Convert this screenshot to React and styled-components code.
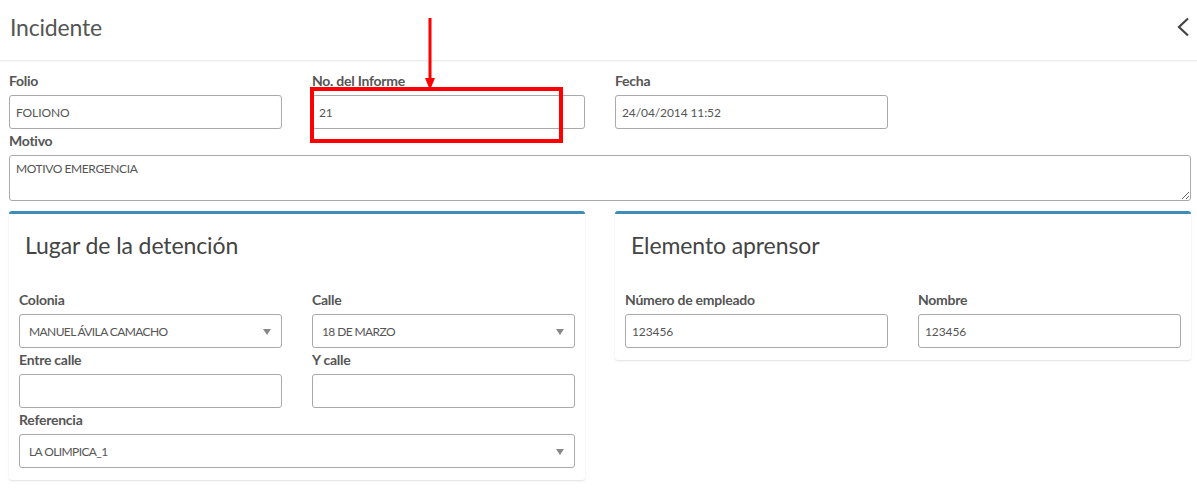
import React from "react";
import styled, { createGlobalStyle } from "styled-components";

const Global = createGlobalStyle`
  html, body { margin: 0; padding: 0; background: #fff; }
  body { font-family: "Lato", "Liberation Sans", sans-serif; color: #555; }
  * { box-sizing: border-box; }
`;

const Page = styled.div`
  position: relative;
  width: 1197px;
  min-height: 497px;
`;

const Header = styled.header`
  height: 61px;
  display: flex;
  align-items: center;
  justify-content: space-between;
  padding: 0 7px 0 10px;
  border-bottom: 1px solid #ececec;
  box-shadow: 0 1px 1px rgba(0, 0, 0, 0.03);
`;

const PageTitle = styled.h1`
  margin: 0 0 7px 0;
  font-size: 23px;
  font-weight: 400;
  color: #555;
  letter-spacing: -0.2px;
`;

const BackButton = styled.button`
  border: 0;
  background: none;
  padding: 0;
  display: flex;
  margin-bottom: 6px;
  cursor: pointer;
`;

const Content = styled.main`
  padding: 11px 6px 20px 9px;
`;

const Grid = styled.div`
  display: grid;
  grid-template-columns: repeat(${(p) => p.cols}, 1fr);
  column-gap: 30px;
  row-gap: 3px;
  align-items: start;
`;

const Field = styled.div`
  display: flex;
  flex-direction: column;
  grid-column: span ${(p) => p.span || 1};
`;

const Label = styled.label`
  display: block;
  height: 18px;
  line-height: 18px;
  margin-bottom: 5px;
  font-size: 14px;
  font-weight: 700;
  color: #555;
  letter-spacing: -0.25px;
`;

const Input = styled.input`
  width: 100%;
  height: 34px;
  border: 1px solid #a9a9a9;
  border-radius: 3px;
  padding: 0 6px;
  font-family: "Lato", "Liberation Sans", sans-serif;
  font-size: 12px;
  color: #555;
  background: #fff;
  outline: none;
  letter-spacing: -0.1px;
`;

const TextArea = styled.textarea`
  width: 100%;
  height: 46px;
  border: 1px solid #a9a9a9;
  border-radius: 3px;
  padding: 5px 6px;
  font-family: "Lato", "Liberation Sans", sans-serif;
  font-size: 12px;
  color: #555;
  outline: none;
  display: block;
  letter-spacing: -0.4px;
`;

const SelectBox = styled.div`
  height: 34px;
  border: 1px solid #a9a9a9;
  border-radius: 3px;
  padding: 0 10px 0 9px;
  display: flex;
  align-items: center;
  justify-content: space-between;
  font-size: 12px;
  color: #555;
  background: #fff;
  letter-spacing: -0.6px;
`;

const Caret = styled.span`
  width: 0;
  height: 0;
  border-left: 4px solid transparent;
  border-right: 4px solid transparent;
  border-top: 6px solid #888;
  margin-top: 1px;
`;

const Panels = styled.div`
  display: grid;
  grid-template-columns: 1fr 1fr;
  column-gap: 30px;
  align-items: start;
  margin-top: 10px;
`;

const Box = styled.section`
  background: #fff;
  border-top: 3px solid #3c8dbc;
  border-radius: 3px;
  box-shadow: 0 1px 2px rgba(0, 0, 0, 0.12);
  padding: 0 10px 12px 10px;
`;

const BoxTitle = styled.h3`
  margin: 0;
  padding: 18px 6px 0 6px;
  height: 77px;
  font-size: 23px;
  line-height: 26px;
  font-weight: 400;
  color: #444;
  letter-spacing: -0.1px;
`;

const Overlay = styled.svg`
  position: absolute;
  left: 0;
  top: 0;
  pointer-events: none;
`;

function TextField({ label, value, span }) {
  return (
    <Field span={span}>
      <Label>{label}</Label>
      <Input readOnly value={value} />
    </Field>
  );
}

function SelectField({ label, value, span }) {
  return (
    <Field span={span}>
      <Label>{label}</Label>
      <SelectBox>
        <span>{value}</span>
        <Caret />
      </SelectBox>
    </Field>
  );
}

export default function App() {
  return (
    <Page>
      <Global />
      <Header>
        <PageTitle>Incidente</PageTitle>
        <BackButton aria-label="Regresar">
          <svg width="14" height="20" viewBox="0 0 14 20">
            <path d="M12 1.5 L3 10 L12 18.5" fill="none" stroke="#444" strokeWidth="2.2" />
          </svg>
        </BackButton>
      </Header>
      <Content>
        <Grid cols={4}>
          <TextField label="Folio" value="FOLIONO" />
          <TextField label="No. del Informe" value="21" />
          <TextField label="Fecha" value="24/04/2014 11:52" />
          <div />
          <Field span={4}>
            <Label>Motivo</Label>
            <TextArea readOnly value="MOTIVO EMERGENCIA" />
          </Field>
        </Grid>
        <Panels>
          <Box>
            <BoxTitle>Lugar de la detención</BoxTitle>
            <Grid cols={2}>
              <SelectField label="Colonia" value="MANUEL ÁVILA CAMACHO" />
              <SelectField label="Calle" value="18 DE MARZO" />
              <TextField label="Entre calle" value="" />
              <TextField label="Y calle" value="" />
              <SelectField label="Referencia" value="LA OLIMPICA_1" span={2} />
            </Grid>
          </Box>
          <Box>
            <BoxTitle>Elemento aprensor</BoxTitle>
            <Grid cols={2}>
              <TextField label="Número de empleado" value="123456" />
              <TextField label="Nombre" value="123456" />
            </Grid>
          </Box>
        </Panels>
      </Content>
      <Overlay width="1197" height="497" viewBox="0 0 1197 497">
        <rect x="312" y="89" width="249" height="52" fill="none" stroke="#ff0000" strokeWidth="4" />
        <rect x="428.5" y="18" width="3" height="62" fill="#ff0000" />
        <polygon points="425,78 435,78 430,90" fill="#ff0000" />
      </Overlay>
    </Page>
  );
}
